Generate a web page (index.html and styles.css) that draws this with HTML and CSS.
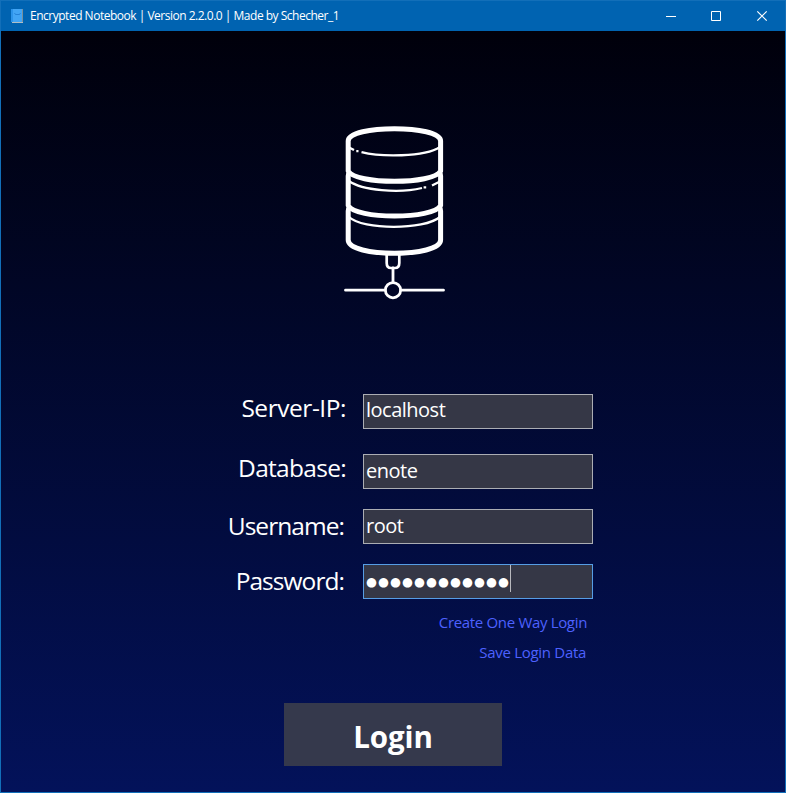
FILE: index.html
```html
<!DOCTYPE html>
<html lang="en">
<head>
<meta charset="utf-8">
<title>Encrypted Notebook</title>
<link rel="stylesheet" href="styles.css">
</head>
<body>
<div class="window">
  <header class="titlebar">
    <svg class="app-icon" width="12" height="14" viewBox="0 0 12 14">
      <path fill="#42a5f5" d="M0 0h12v13H0z"/>
      <path fill="#2b93ea" d="M0 0h2v13H0z"/>
      <path fill="#78909c" d="M11 0h1v13h-1z"/>
      <path fill="#b0bec5" d="M1 13h11v1H1z"/>
      <path fill="none" stroke="#1e78d0" stroke-width=".8" d="M3.500 4l1 1.500h4L9.500 4"/>
    </svg>
    <span class="title">Encrypted Notebook | Version 2.2.0.0 | Made by Schecher_1</span>
    <svg class="controls" width="137" height="29" viewBox="0 0 137 29" fill="none" stroke="#fff">
      <path d="M18 14.5h10M63.5 9.5h9v9h-9z"/>
      <path d="M109.3 9.3l9.4 9.4M118.7 9.3l-9.4 9.4" stroke-width="1.2"/>
    </svg>
  </header>
  <main class="content">
    <svg class="logo" width="104" height="178" viewBox="342 124 104 178" fill="none" stroke="#fff">
      <g stroke-width="5" stroke-linejoin="round">
        <path d="M348.200 141C348.200 124.500 440.600 124.500 440.600 141V171C434 184.700 355 184.700 348.200 171Z"/>
        <path d="M349.200 172.500Q348.200 174 348.200 176V205.500C355 219.500 434 219.500 440.600 205.500V176Q440.600 174 439.600 172.500"/>
        <path d="M349.200 207.500Q348.200 209 348.200 211V240C348.200 257.700 440.600 257.700 440.600 240V211Q440.600 209 439.600 207.500"/>
      </g>
      <g stroke-width="2.300">
        <path d="M349 147.500L354 150M356.300 151.200h2.200M361.500 152.200C380 156.800 424 157.500 440 147"/>
        <path d="M349 181C362 190.500 399 193.500 422 188M423.600 187.300h2.600M432 185.500L440 181.500"/>
        <path d="M349 217C363 230.200 424 230.200 440 217"/>
        <path stroke-width="2.700" d="M386.700 255V263Q386.700 268 391 268H395Q399.300 268 399.300 263V255"/>
        <path stroke-width="2.800" d="M393 268V282M345.500 290.200H385M401 290.200H443.500" stroke-linecap="round"/>
        <circle stroke-width="2.800" cx="393" cy="290.200" r="7.600"/>
      </g>
    </svg>
    <form class="form">
      <div class="row server"><label class="label">Server-IP:</label><div class="field">localhost</div></div>
      <div class="row database"><label class="label">Database:</label><div class="field">enote</div></div>
      <div class="row username"><label class="label">Username:</label><div class="field">root</div></div>
      <div class="row password"><label class="label">Password:</label><div class="field"><span class="dots">●●●●●●●●●●●●</span><span class="caret"></span></div></div>
    </form>
    <nav class="links">
      <a class="link create">Create One Way Login</a>
      <a class="link save">Save Login Data</a>
    </nav>
    <div class="login">Login</div>
  </main>
</div>
</body>
</html>
```

FILE: styles.css
```css
* { box-sizing: border-box; }
body { margin: 0; font-family: "Open Sans", "Noto Sans", sans-serif; color: #fff; }
.window {
  width: 786px;
  height: 793px;
  border: 1px solid #126fb9;
  display: flex;
  flex-direction: column;
  overflow: hidden;
}
.titlebar {
  height: 30px;
  flex: none;
  display: flex;
  align-items: center;
  background: #0063b1;
  padding-left: 10px;
}
.app-icon { margin-right: 7px; }
.title {
  font-size: 12px;
  letter-spacing: -0.49px;
  line-height: 28px;
  white-space: nowrap;
}
.controls { margin-left: auto; }
.content {
  flex: 1;
  display: flex;
  flex-direction: column;
  background: linear-gradient(#00000b, #03125a);
}
.logo { display: block; margin: 93px 0 0 341px; flex: none; }
.form { margin-top: 92px; }
.row { display: flex; height: 35px; margin-bottom: 20px; }
.row.server { margin-bottom: 25px; }
.label {
  width: 345px;
  height: 35px;
  flex: none;
  text-align: right;
  font-size: 24.5px;
  line-height: 28px;
  letter-spacing: -0.45px;
  white-space: nowrap;
}
.field {
  width: 230px;
  height: 35px;
  margin-left: 17px;
  display: flex;
  border: 1px solid #abadb3;
  background: #353746;
  padding-left: 2px;
  font-size: 20px;
  line-height: 30px;
  letter-spacing: -0.5px;
}
.database .label { letter-spacing: -0.7px; }
.database .field, .username .field { line-height: 31px; }
.username .label, .password .label { width: 343px; line-height: 34px; letter-spacing: -0.95px; }
.username .field, .password .field { margin-left: 19px; }
.password .field { border-color: #569de5; }
.dots {
  width: 144px;
  flex: none;
  font-family: "DejaVu Sans", sans-serif;
  font-size: 12.5px;
  letter-spacing: 1.1px;
  line-height: 33px;
}
.caret { width: 1px; height: 27px; background: #b8b8bd; }
.links {
  width: 586px;
  display: flex;
  flex-direction: column;
  align-items: flex-end;
  margin-top: -12px;
}
.link { font-size: 15px; line-height: 30px; letter-spacing: -0.33px; color: #4d61ff; }
.save { margin-right: 1px; letter-spacing: -0.3px; }
.login {
  width: 218px;
  height: 63px;
  margin: 36px 0 0 283px;
  background: #35394c;
  text-align: center;
  font-size: 29.5px;
  font-weight: 700;
  line-height: 67px;
  letter-spacing: -0.1px;
}
```
